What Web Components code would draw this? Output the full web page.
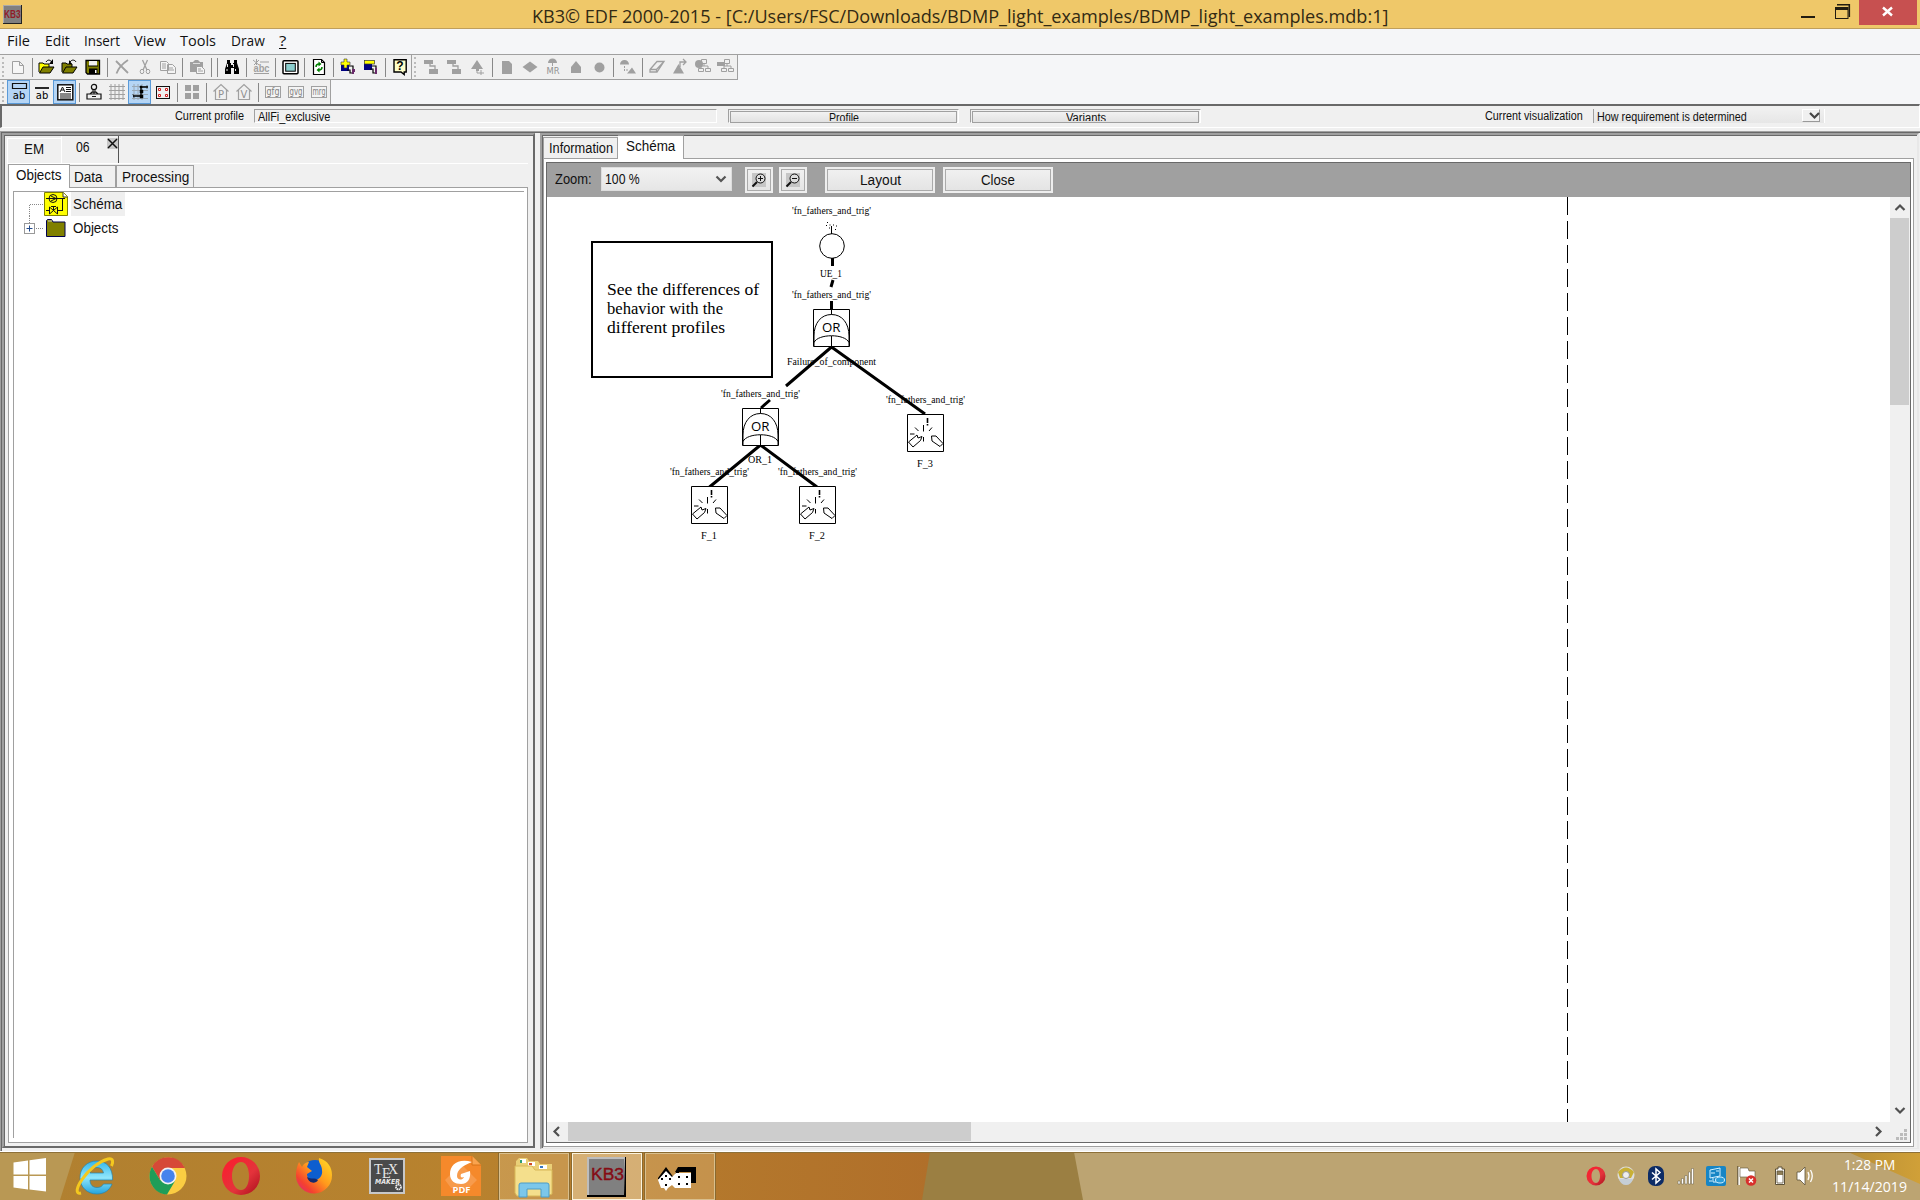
<!DOCTYPE html>
<html lang="en">
<head>
<meta charset="utf-8">
<title>KB3</title>
<style>
html,body{margin:0;padding:0}
body{width:1920px;height:1200px;overflow:hidden;background:#f0f0f0;font-family:"Liberation Sans",Arial,sans-serif;color:#111}
kb-app{height:1200px}
</style>
</head>
<body>
<kb-app></kb-app>
<script>
const define = (tag, css, html, setup) => {
  const t = document.createElement('template');
  t.innerHTML = `<style>*{box-sizing:border-box}:host{box-sizing:border-box;display:block}svg{overflow:visible}${css}</style>${html}`;
  customElements.define(tag, class extends HTMLElement {
    constructor() {
      super();
      this.attachShadow({ mode: 'open' }).append(t.content.cloneNode(true));
    }
    connectedCallback() { if (setup) setup.call(this, this.shadowRoot); }
  });
};

/* A single line of text squeezed or stretched to an exact width */
define('fit-text',
  `:host{display:block;flex:none;line-height:16px;font-size:14px;white-space:nowrap}
   span{display:inline-block;transform-origin:0 0}`,
  `<span><slot></slot></span>`,
  function (r) {
    const w = +this.getAttribute('w');
    this.style.width = w + 'px';
    if (this.hasAttribute('size')) this.style.fontSize = this.getAttribute('size') + 'px';
    const s = r.querySelector('span');
    s.style.transform = `scaleX(${w / s.offsetWidth})`;
  });

/* ---------- toolbar icons, 20x20 grid ---------- */
const G = '#a0a0a0';
const folder = (c, flip) => `<path d="M2 15V6h4l1 1h5v3" fill="${flip ? '#808000' : '#ffff00'}" stroke="#000"/><path d="M2.500 16L6 10h11l-4 6z" fill="#808000" stroke="#000"/>` +
  (flip ? `<path d="M10 5c2-3 5-2 6 0" fill="none" stroke="#000"/><path d="M9 3v4h3z"/>` : `<path d="M9 5c2-3 4-2 6 0" fill="none" stroke="#000"/><path d="M16 2v5h-4z"/>`);
const org = `<path d="M8.500 2.500h5v4h-5zM5.500 11.500h5v3h-5zM12.500 11.500h5v3h-5zM11 7v2M8 11V9h7v2" fill="#f0f0f0" stroke="${G}"/>`;
const box3 = t => `<rect x="2.500" y="4.500" width="15" height="11" fill="#f4f4f4" stroke="${G}"/><text x="10" y="12.500" textLength="13" lengthAdjust="spacingAndGlyphs" text-anchor="middle" font-size="10" font-family="DejaVu Sans,sans-serif" fill="#808080">${t}</text>`;
const ICONS = {
  new: `<path d="M4.500 4.500h7l4 4v8h-11zM11.500 4.500v4h4" fill="#f6f6f6" stroke="${G}"/>`,
  open: folder('', 0), open2: folder('', 1),
  save: `<path d="M3 3.500h13.500v13.500H4.500L3 15.500z" fill="#808000" stroke="#000" stroke-width="1.300"/><path d="M6 4h8v5H6z" fill="#f0f0f0"/><path d="M5 9h10" stroke="#000"/><path d="M6 11.500h8.500V17H6z"/><path d="M12 13h1.500v3H12z" fill="#fff"/>`,
  del: `<path d="M4 4l12 12M16 3C10 7 6 12 4.500 16.500" fill="none" stroke="${G}" stroke-width="1.800"/>`,
  cut: `<path d="M7.500 3l4.500 10M12.500 3L8 13" stroke="${G}" stroke-width="1.300"/><ellipse cx="7" cy="14.500" rx="1.800" ry="2.200" fill="none" stroke="${G}"/><ellipse cx="13" cy="14.500" rx="1.800" ry="2.200" fill="none" stroke="${G}"/>`,
  copy: `<path d="M2.500 4.500h6l2 2v7h-8zM9.500 7.500h5l3 3v6h-8z" fill="#f4f4f4" stroke="${G}"/><path d="M4 7h4M4 9h4M4 11h4M11 11h4M11 13h5" stroke="${G}"/>`,
  paste: `<path d="M3 5h3l2-2h3l2 2h3v10H3z" fill="${G}"/><path d="M9.500 9.500h5l3 3v4h-8z" fill="#f4f4f4" stroke="${G}"/><path d="M11 12h3M11 14h5" stroke="${G}"/><path d="M6 6.500h7" stroke="#ddd"/>`,
  find: `<path d="M5 3h3v3h1v2h2V6h1V3h3v3l2 6v5h-5v-6H9v6H3v-5l2-6z"/><path d="M5.500 7v3M11.500 7v3M5 12v2M13.500 12v2" stroke="#fff" stroke-width=".9"/>`,
  abc: `<text x="10.500" y="15" text-anchor="middle" textLength="16" lengthAdjust="spacingAndGlyphs" font-weight="bold" font-size="11" font-family="Liberation Sans" fill="${G}">abc</text><path d="M3 16.500h15M2 3l6 5M8 3L3 8M5.500 2v6M9 5h9" stroke="${G}"/>`,
  screen: `<rect x="3" y="3.800" width="15" height="13" rx="1" fill="#fff" stroke="#000" stroke-width="1.500"/><rect x="5.700" y="6.400" width="9.600" height="7.800" fill="#8ccfcf" stroke="#000"/>`,
  refresh: `<path d="M4.500 2.500h8l3 3v12h-11z" fill="#fff" stroke="#000" stroke-width="1.200"/><path d="M12.500 2.500v3h3" fill="none" stroke="#000"/><path d="M7 10c0-2 1-3 3-3M13 10c0 2-1 3-3 3" stroke="#008000" stroke-width="1.500" fill="none"/><path d="M9.500 4.500v5l3-2.500zM10.500 10.500v5l-3-2.500z" fill="#008000"/>`,
  add: `<rect x="3" y="8" width="8" height="6" fill="#000080"/><path d="M6 2h3v3h3v3H9v3H6V8H3V5h3z" fill="#ff0" stroke="#333" stroke-width=".6"/><path d="M11 9h4v4M9 13h3v3h3" fill="none" stroke="#000" stroke-width="1.200"/><path d="M14 12h3v3h-3zM14 15h2v2h-2z" fill="#6b2a6b"/>`,
  rem: `<rect x="3" y="7" width="8" height="6" fill="#000080"/><rect x="3.500" y="3.500" width="10" height="3.500" fill="#ff0" stroke="#333" stroke-width=".7"/><path d="M11 9h4v4M9 12h3v4h2" fill="none" stroke="#000" stroke-width="1.200"/><path d="M14 11h2v3h-2zM14 14h2v3h-2z" fill="#6b2a6b"/>`,
  help: `<path d="M4 2.800h12.200V15h-2v2.500L11 15H4z" fill="#ffffc8" stroke="#000" stroke-width="1.400"/><text x="10" y="13" text-anchor="middle" font-weight="bold" font-size="12" font-family="Liberation Sans">?</text>`,
  link: `<path d="M2 3h9v4H2zM7 12h9v5H7z" fill="${G}"/><path d="M8 7v2h5v3" fill="none" stroke="${G}" stroke-width="1.300"/>`,
  trilink: `<path d="M9 3l6 9H3zM8 12h3v2H8z" fill="${G}"/><path d="M9 11v5h7M13 13v5" fill="none" stroke="${G}"/>`,
  page: `<path d="M5 4h7l3 3v10H5z" fill="${G}"/>`,
  diamond: `<path d="M10 4.500l7.500 5.500-7.500 5.500L2.500 10z" fill="${G}"/>`,
  mr: `<path d="M5 6a4.500 4.500 0 0 1 9 0z" fill="${G}"/><path d="M9.500 6v3" stroke="${G}"/><text x="10" y="17" text-anchor="middle" textLength="13" lengthAdjust="spacingAndGlyphs" font-size="9" font-family="DejaVu Sans" fill="#909090">MR</text>`,
  house: `<path d="M10 4l5 6v6H5v-6z" fill="${G}"/>`,
  dot: `<circle cx="10.500" cy="10.500" r="5" fill="${G}"/>`,
  trans: `<path d="M2 7.500a4.500 4.500 0 0 1 9 0zM9 16.500l5-6 4 6z" fill="${G}"/><path d="M6.500 9v6M8 13h3" stroke="${G}" stroke-dasharray="2 1"/>`,
  erase: `<path d="M3 12.500L10 4.500h7L10 15H3zM3 12.500h6.500L17 4.500M9.500 12.500V15" fill="none" stroke="${G}" stroke-width="1.300"/>`,
  tri2: `<path d="M3 16.500L8.500 7l5.500 9.500z" fill="${G}"/><path d="M10 10V5h5M13 2l3 3-3 3" fill="none" stroke="${G}" stroke-width="1.300"/>`,
  org1: org + `<circle cx="6" cy="7" r="4" fill="${G}"/>`, org2: org + `<path d="M1 5h8v4H1z" fill="${G}"/>`,
  boxab: `<path d="M3.500 1.500h14v5h-14z" fill="none" stroke="#111" stroke-width="1.200"/><text x="10" y="17" text-anchor="middle" textLength="12.500" lengthAdjust="spacingAndGlyphs" font-size="11" font-family="DejaVu Sans">ab</text>`,
  lineab: `<path d="M3 6h14" stroke="#111" stroke-width="1.800"/><text x="10" y="17" text-anchor="middle" textLength="12.500" lengthAdjust="spacingAndGlyphs" font-size="11" font-family="DejaVu Sans">ab</text>`,
  doc: `<rect x="2.800" y="2.800" width="15" height="15" fill="#fff" stroke="#111" stroke-width="1.500"/><path d="M5 10l2.500-5L10 10M6 8h3M11 5.500h5M11 7.500h5M11 9.500h5M5 12h11M5 14h11M5 16h11" fill="none" stroke="#111"/>`,
  stamp: `<path d="M3 12h14v5H3zM6 12l2-2h4l2 2" fill="#f0f0f0" stroke="#111" stroke-width="1.200"/><circle cx="10" cy="5" r="2.600" fill="#f0f0f0" stroke="#111" stroke-width="1.200"/><path d="M9 8v3h2V8M8 14.500h4" fill="none" stroke="#111"/>`,
  grid: `<path d="M4 2v16M8 2v16M12 2v16M16 2v16M2 4.500h16M2 8.500h16M2 12.500h16M2 16.500h16" stroke="${G}"/>`,
  snap: `<path d="M4 2v16M8 2v16M12 2v16M2 4.500h16M2 8.500h16M2 12.500h16M2 16.500h16" stroke="#9aa8b5"/><path d="M3 14h8V5h7" fill="none" stroke="#000" stroke-width="1.300"/><path d="M3 12l1 4M10 8h3v3h-3zM17 3v4M10 4h2v2h-2zM10 13h3v3h-3z" stroke="#000" stroke-width=".5"/>`,
  select: `<rect x="3.500" y="4.500" width="13" height="12" fill="none" stroke="#111"/><path d="M5.500 6.500h2v2h-2zM12.500 6.500h2v2h-2zM5.500 12.500h2v2h-2zM12.500 12.500h2v2h-2z" fill="#fff" stroke="#d02020"/>`,
  tiles: `<path d="M3 3h6v6H3zM11 3h6v6h-6zM3 11h6v6H3zM11 11h6v6h-6z" fill="${G}"/>`,
  hp: `<path d="M2.500 9.500L10 2.500l7.500 7M4.500 8v9.500h11V8" fill="none" stroke="${G}" stroke-width="1.200"/><text x="10" y="15.500" text-anchor="middle" font-size="10" font-family="DejaVu Sans" fill="#909090">P</text>`,
  hv: `<path d="M2.500 9.500L10 2.500l7.500 7M4.500 8v9.500h11V8" fill="none" stroke="${G}" stroke-width="1.200"/><text x="10" y="15.500" text-anchor="middle" font-size="10" font-family="DejaVu Sans" fill="#909090">V</text>`,
  gfg: box3('gfg'), gvg: box3('gvg'), mrg: box3('mrg')
};
define('tb-icon',
  `:host{flex:none;width:23px;height:24px;display:flex;align-items:center;justify-content:center}
   :host([on]){background:#b5d5f5;border:1px solid #5a9ad8}svg{display:block;flex:none}`,
  `<svg width="20" height="20" viewBox="0 0 20 20"></svg>`,
  function (r) { r.querySelector('svg').innerHTML = ICONS[this.getAttribute('name')]; });
define('tb-sep', `:host{flex:none;width:6px;height:19px;display:flex;justify-content:center}i{width:1px;background:#888}`, `<i></i>`);
define('tb-grip', `:host{flex:none;width:7px;height:20px;padding-left:2px}i{display:block;width:2px;height:100%;background:repeating-linear-gradient(#bbb 0 2px,transparent 2px 4.500px)}`, `<i></i>`);
define('tool-strip', `:host{display:flex;align-items:center;background:#f0f0f0;border-right:1px solid #a0a0a0;border-bottom:1px solid #a0a0a0;flex:none}`, `<slot></slot>`);

const strip = s => s.split(' ').map(n => n === '|' ? '<tb-sep></tb-sep>' : n[0] === '*' ? `<tb-icon on name="${n.slice(1)}"></tb-icon>` : `<tb-icon name="${n}"></tb-icon>`).join('');
define('tool-area',
  `:host{height:49px;background:#f5f6f8;display:flex;flex-direction:column}
   div{display:flex;height:25px}tool-strip{height:25px}.two{height:24px}.two tool-strip{height:24px;border-bottom:0}
   .a tb-grip{margin-right:-1px}.b tb-grip{width:8px}`,
  `<div><tool-strip class="a"><tb-grip></tb-grip>${strip('new | open open2 save | del cut copy | paste | | find | abc | screen | refresh | add rem | help')}</tool-strip>
   <tool-strip class="b"><tb-grip></tb-grip>${strip('link link trilink | page diamond mr house dot | trans | erase tri2 org1 org2')}</tool-strip></div>
   <div class="two"><tool-strip><tb-grip></tb-grip>${strip('*boxab lineab *doc | stamp grid *snap select | tiles | hp hv | gfg gvg mrg')}</tool-strip></div>`);

define('title-bar',
  `:host{height:29px;background:#efc869;border-bottom:1px solid #bf9f5c;display:flex;font-family:"Open Sans","Noto Sans",sans-serif;color:#322a14}
   .ic{margin:5px 0 0 3px}.t{margin:2px 0 0 510px;line-height:27px}.w{margin-left:auto;margin-top:0}`,
  `<svg class="ic" width="19" height="19" viewBox="0 0 19 19"><path d="M0 0h19v19H0z" fill="#222"/><path d="M0 0h18v18H0z" fill="#aaa"/><path d="M1 1h17v17H1z" fill="#808080"/><text x="1" y="12.500" textLength="16.500" lengthAdjust="spacingAndGlyphs" font-size="11" font-weight="bold" font-family="Liberation Sans" fill="#901c28">KB3</text></svg>
   <fit-text class="t" w="856" size="18.500">KB3© EDF 2000-2015 - [C:/Users/FSC/Downloads/BDMP_light_examples/BDMP_light_examples.mdb:1]</fit-text>
   <svg class="w" width="119" height="28" viewBox="1801 0 119 28"><path d="M1801 16h14v2h-14z" fill="#221c10"/><path d="M1837 4.700h12.300V17" fill="none" stroke="#221c10" stroke-width="1.600"/><rect x="1835.500" y="7.500" width="12.500" height="11" fill="none" stroke="#221c10"/><path d="M1835 7h13v3h-13z" fill="#221c10"/><path d="M1859 0h58v25h-58z" fill="#c75050"/><path d="M1883 7.500l9 8M1892 7.500l-9 8" stroke="#fff" stroke-width="2.400"/></svg>`);
define('menu-bar',
  `:host{height:26px;background:#f5f6f8;border-bottom:1px solid #a0a0a0;display:flex;padding:2px 0 0 7px;font-family:"Open Sans","Noto Sans",sans-serif}
   fit-text{line-height:20px}u{text-underline-offset:2px}`,
  [['File', 23, 15], ['Edit', 25, 14], ['Insert', 36, 14], ['View', 32, 14], ['Tools', 36, 15], ['Draw', 34, 14], ['<u>?</u>', 7, 0]].map(m => `<fit-text w="${m[1]}" size="14.500" style="margin-right:${m[2]}px">${m[0]}</fit-text>`).join(''));

define('profile-button',
  `:host{flex:none;width:231px;height:14px;border:1px solid;border-color:#a0a0a0 #fff #fff #a0a0a0;padding:1px 1px 0 1px}
   div{height:12px;border:1px solid #a0a0a0;background:linear-gradient(#f2f2f2,#e2e2e2);display:flex;justify-content:center;overflow:hidden}
   p{margin:0;height:9px;overflow:hidden;line-height:11px}`,
  `<div><p><slot></slot></p></div>`);
define('profile-bar',
  `:host{height:24px;border:solid;border-width:2px 1px 1px 2px;border-color:#696969 #fff #fff #696969;display:flex;align-items:flex-start;padding-top:3px;background:#f0f0f0}
   fit-text{line-height:14px}
   .f{height:14px;width:463px;margin:0 11px 0 10px;border:1px solid;border-color:#a0a0a0 #fff #fff #a0a0a0;padding:0 0 0 3px}
   .c{display:flex;margin-left:10px;width:232px;height:14px;border-left:1px solid #a0a0a0;border-right:1px solid #fff;padding-left:3px;background:linear-gradient(#f0f0f0,#e6e6e6)}
   .c fit-text{padding-top:1px}
   .d{margin:0 4px 0 auto;width:18px;height:13px;background:#f0f0f0;border:1px solid;border-color:#fff #999 #999 #fff}`,
  `<fit-text w="69" size="12" style="margin-left:173px">Current profile</fit-text>
   <div class="f"><fit-text w="72" size="12">AllFi_exclusive</fit-text></div>
   <profile-button><fit-text w="30" size="12" style="line-height:12px">Profile</fit-text></profile-button>
   <profile-button style="margin-left:11px"><fit-text w="40" size="12" style="line-height:12px">Variants</fit-text></profile-button>
   <fit-text w="98" size="12" style="margin-left:284px">Current visualization</fit-text>
   <div class="c"><fit-text w="150" size="12">How requirement is determined</fit-text><svg class="d" viewBox="0 0 16 11"><path d="M7 3l4.500 4.500L16 3" fill="none" stroke="#444" stroke-width="2.200"/></svg></div>`);

/* ---------- left panel ---------- */
define('object-tree',
  `:host{border-left:1px solid #a0a0a0;border-top:1px solid #a0a0a0;background:#fff;flex:1}
   .r{display:flex;align-items:center;height:24px}.h{background:#efefef;height:24px;width:54px;padding:4px 2px}`,
  `<div class="r"><svg width="57" height="24" viewBox="14 192 57 24"><path d="M29.500 216V204.500H44" fill="none" stroke="#888" stroke-dasharray="1 1"/><path d="M44.500 192.500h19l4 4v19h-23z" fill="#ff0" stroke="#808000"/><path d="M63 192.500v4.500h4.500" fill="#fff" stroke="#333"/><circle cx="53" cy="198.500" r="4" fill="none" stroke="#111"/><path d="M46 198.500h12M51 196l5 2.500-5 2.500M57 198.500h8M62.500 198v13M46 210.500h4M58 210.500h5M49.500 207v7l8-7v7zM53.500 210v-3M51 206.500h5" fill="none" stroke="#111"/></svg><div class="h"><fit-text w="49">Schéma</fit-text></div></div>
   <div class="r"><svg width="57" height="24" viewBox="14 216 57 24"><path d="M29.500 216v7M36 228.500h8" fill="none" stroke="#888" stroke-dasharray="1 1"/><rect x="24.500" y="223.500" width="10" height="10" fill="#fff" stroke="#999"/><path d="M26.500 228.500h6M29.500 225.500v6" stroke="#234a8c"/><path d="M46.500 236.500v-16l1-1h4l1.500 2.500h12v14.500z" fill="#808000" stroke="#000050"/><path d="M48 221h4" stroke="#ccc"/></svg><fit-text w="45" style="margin-left:2px">Objects</fit-text></div>`);
define('left-panel',
  `:host{width:533px;height:1015px;flex:none;border:2px solid;border-color:#a0a0a0 #696969 #696969 #a0a0a0;box-shadow:inset 1px 1px #696969;display:flex;flex-direction:column;background:#f0f0f0;padding:1px 5px 3px 4px}
   .doc{display:flex;height:28px;align-items:flex-start;border-bottom:1px solid #fff;margin-left:-1px}
   .em{margin-top:2px;width:54px;height:25px;border-left:1px solid #fff;border-top:1px solid #fff;padding:2px 0 0 16px}
   .six{width:58px;height:27px;border-left:1px solid #fff;border-right:1px solid #555;padding:3px 0 0 14px;display:flex;justify-content:space-between}.six svg{margin-top:-1px}
   .tabs{display:flex;align-items:flex-end;height:24px;margin-bottom:-1px;z-index:1}
   .tabs div{height:23px;border:1px solid #a0a0a0}.tabs .on{height:24px;width:62px;background:#fff;border-bottom:0;padding:2px 0 0 7px}
   .page{flex:1;display:flex;border:1px solid #a0a0a0;background:#fff;padding:3px 3px 4px 4px}`,
  `<div class="doc"><div class="em"><fit-text w="20">EM</fit-text></div><div class="six"><fit-text w="14">06</fit-text><svg width="11" height="11" viewBox="0 0 11 11"><path d="M0 0h11v11H0z" fill="#c8c8c8"/><path d="M1 1l9 9M10 1l-9 9" stroke="#111" stroke-width="1.500"/></svg></div></div>
   <div class="tabs"><div class="on"><fit-text w="45">Objects</fit-text></div><div style="width:46px;padding:3px 0 0 4px;border-left:0"><fit-text w="29">Data</fit-text></div><div style="width:78px;padding:3px 0 0 5px"><fit-text w="67">Processing</fit-text></div></div>
   <div class="page"><object-tree></object-tree></div>`);

/* ---------- diagram ---------- */
const T = (x, y, w, s, size = 11) => `<text x="${x}" y="${y}" textLength="${w}" lengthAdjust="spacingAndGlyphs" font-size="${size}">${s}</text>`;
const trig = (x, y) => T(x, y, 79, "'fn_fathers_and_trig'", 10.5);
const gate = (x, y) => `<g transform="translate(${x} ${y})" fill="none" stroke="#000"><path d="M.5.5h36v37H.500z" fill="#fff"/><path d="M18.500 0v5.500M1 37V27C1 14 8 5.500 18.500 5.500S36 14 36 27v10M1 33.500C5 24.500 32 24.500 36 33.500M18.500 27v10"/><text x="9" y="23" fill="#000" stroke="none" font-family="Open Sans" font-size="12.500" textLength="18.500" lengthAdjust="spacingAndGlyphs">OR</text></g>`;
const leaf = (x, y) => `<g transform="translate(${x} ${y})" fill="none" stroke="#000"><path d="M.5.5h36v37H.500z" fill="#fff"/><path d="M20.500 4v5M20.500 10v1.500" stroke-width="1.600"/><path d="M8 13.500l3.500 3.500M16.500 11v6.500M25 13.500L22 17M3 20h4.500M16.500 23v4.500M1.500 28l8.500-7 1 3 4-1.500-1.500 4L6 33zM24.500 22h4.500l7 7.500-3 3-8-5.500z"/></g>`;
define('diagram-canvas',
  `:host{flex:none;width:1343px;height:925px;background:#fff}svg{display:block}`,
  `<svg width="1343" height="925" viewBox="547 197 1343 925" font-family="Liberation Serif,Times New Roman,serif">
   <path d="M1567.500 197v925" stroke="#000" stroke-width="1" stroke-dasharray="18 6"/>
   <rect x="592" y="242" width="180" height="135" fill="#fff" stroke="#000" stroke-width="2"/>
   ${T(607, 295, 152, 'See the differences of', 16)}${T(607, 314, 116, 'behavior with the', 16)}${T(607, 333, 118, 'different profiles', 16)}
   <circle cx="832" cy="246" r="12.300" fill="none" stroke="#000"/><path d="M831.500 226v8" stroke="#000"/><path d="M827 222.500h1M829.500 225h1M826 225.500h1M833 225h1M835 229.500h1M829 228h1M836 226h1" stroke="#000"/>
   <g fill="none" stroke="#000" stroke-width="3"><path d="M832.500 258v8M833 280l-2 7M831.500 301v8M831.500 347L786 386M770 400l-9 8M831.500 347L925 414M760.500 445L709.500 487M760.500 445L817 487"/></g>
   ${gate(813, 309)}${gate(742, 408)}${leaf(691, 486)}${leaf(799, 486)}${leaf(907, 414)}
   ${trig(792, 214)}${trig(792, 298)}${trig(721, 397)}${trig(886, 403)}${trig(670, 475)}${trig(778, 475)}
   ${T(820, 277, 22, 'UE_1', 10.5)}${T(787, 365, 89, 'Failure_of_component', 10.5)}${T(748, 463, 24, 'OR_1', 10.5)}${T(917, 467, 16, 'F_3', 10.5)}${T(701, 539, 16, 'F_1', 10.5)}${T(809, 539, 16, 'F_2', 10.5)}
   </svg>`);
define('v-scroll', `:host{width:20px;height:925px;background:#f0f0f0;display:flex;flex-direction:column;justify-content:space-between}i{display:block;height:187px;width:19px;background:#cdcdcd;margin-bottom:auto}svg{display:block}`,
  `<svg width="20" height="21"><path d="M5.500 13L10 8.500l4.500 4.500" fill="none" stroke="#505050" stroke-width="2.200"/></svg><i></i><svg width="20" height="21"><path d="M5.500 7L10 11.500 14.500 7" fill="none" stroke="#505050" stroke-width="2.200"/></svg>`);
define('h-scroll', `:host{height:20px;background:#f0f0f0;display:flex}i{display:block;width:403px;height:19px;background:#cdcdcd;margin-right:auto}svg{display:block}`,
  `<svg width="21" height="20"><path d="M12 5L7.500 9.500 12 14" fill="none" stroke="#505050" stroke-width="2.200"/></svg><i></i><svg width="43" height="20"><path d="M9 5l4.500 4.500L9 14" fill="none" stroke="#505050" stroke-width="2.200"/><path d="M37 7h3v3h-3zM33 11h3v3h-3zM37 11h3v3h-3zM29 15h3v3h-3zM33 15h3v3h-3zM37 15h3v3h-3z" fill="#bbb"/></svg>`);
define('grey-button', `:host{flex:none;height:26px;border:1px solid #eee;padding:1px}div{height:22px;border:1px solid #aaa;background:linear-gradient(#f0f0f0,#e4e4e4);display:flex;justify-content:center;align-items:center;box-shadow:0 0 0 1px #eee}`, `<div><slot></slot></div>`);
define('zoom-bar',
  `:host{height:34px;background:#a0a0a0;display:flex;align-items:flex-start;padding:4px 0 0 8px}
   .z{margin-top:4px}.c{display:flex;margin:0 13px 0 9px;width:131px;height:24px;background:linear-gradient(#f2f2f2,#e6e6e6);border:1px solid #ddd;padding:3px 3px;justify-content:space-between}`,
  `<fit-text class="z" w="37">Zoom:</fit-text><div class="c"><fit-text w="35">100 %</fit-text><svg width="14" height="14"><path d="M2.500 5.500L7 10l4.500-4.500" fill="none" stroke="#555" stroke-width="2.200"/></svg></div>
   ${['M6 5.500h5M8.500 3v5', 'M6 5.500h5'].map((p, i) => `<grey-button style="width:28px;margin-right:${i ? 18 : 6}px"><svg width="14" height="14" viewBox="0 0 14 14"><path d="M0 0h14v14H0z" fill="#c6c6c6"/><circle cx="8.500" cy="5.500" r="4.500" fill="#ddd" stroke="#111"/><path d="M5 9l-4.500 4.500" stroke="#111" stroke-width="2"/><path d="${p}" stroke="#111"/></svg></grey-button>`).join('')}
   <grey-button style="width:110px;margin-right:8px"><fit-text w="41">Layout</fit-text></grey-button><grey-button style="width:110px"><fit-text w="34">Close</fit-text></grey-button>`);
define('right-panel',
  `:host{flex:1;height:1016px;border:2px solid;border-width:2px 2px 1px 2px;border-color:#a0a0a0 #e8e8e8 #e8e8e8 #a0a0a0;box-shadow:inset 1px 1px #696969;display:flex;flex-direction:column;padding:0 3px 1px 1px;background:#f0f0f0}
   .tabs{display:flex;flex:none;align-items:flex-end;height:23px;z-index:1}
   .tabs div{height:21px;border:1px solid #a0a0a0;border-bottom:0;width:75px;padding:2px 0 0 5px}.tabs .on{height:24px;width:66px;background:#fff;padding:2px 0 0 8px;margin-bottom:-1px;border-left:0}
   .page{flex:none;height:989px;border:1px solid #a0a0a0;background:#fff;padding:3px 2px}.in{border:1px solid #696969;height:981px}.row{display:flex}`,
  `<div class="tabs"><div><fit-text w="64">Information</fit-text></div><div class="on"><fit-text w="49">Schéma</fit-text></div></div>
   <div class="page"><div class="in"><zoom-bar></zoom-bar><div class="row"><diagram-canvas></diagram-canvas><v-scroll></v-scroll></div><h-scroll></h-scroll></div></div>`);
define('work-space',
  `:host{height:1024px;padding-top:3px;background:#f0f0f0;border-bottom:1px solid #fff}
   div{height:1020px;display:flex;align-items:flex-start;border:2px solid;border-width:1px 0 0 1px;border-color:#a0a0a0;box-shadow:inset 1px 1px #696969;padding:1px 1px 0 1px}right-panel{margin-left:5px}`,
  `<div><left-panel></left-panel><right-panel></right-panel></div>`);

/* ---------- task bar ---------- */
const opera = (id, s) => `<svg width="${s}" height="${s}" viewBox="0 0 40 40"><defs><linearGradient id="${id}" x2="1" y2="1"><stop stop-color="#ff1b2d"/><stop offset=".6" stop-color="#e3333b"/><stop offset="1" stop-color="#a90d1a"/></linearGradient></defs><path fill-rule="evenodd" d="M20 1a19 19 0 1 0 0 38 19 19 0 1 0 0-38zm0 5c5 0 8 6 8 14s-3 14-8 14-9-6-9-14 4-14 9-14z" fill="url(#${id})"/></svg>`;
define('task-cell',
  `:host{flex:none;width:73.200px;height:48px;display:flex;align-items:center;justify-content:center}
   div{display:flex;align-items:center;justify-content:center}
   :host([open]) div{width:70px;height:47px;margin-top:1px;background:rgba(225,190,130,.38);border:1px solid #d9bf8d;outline:1px solid #8a6a30}
   :host([active]) div{background:rgba(235,210,165,.6);border-color:#fbf3dd}`,
  `<div><slot></slot></div>`);
define('task-bar',
  `:host{height:48px;display:flex;position:relative;font-family:"Open Sans","Noto Sans",sans-serif;color:#fff;background:#bca470;overflow:hidden}
   .bg{position:absolute;left:0;top:0}.m{position:relative;display:flex;width:100%;height:48px}
   .start{width:58px;height:48px;flex:none}.tray{margin-left:auto;display:flex;align-items:center;flex:none}
   .clock{width:76px;margin:0 13px 0 0;display:flex;flex-direction:column;align-items:center}.clock fit-text{line-height:22px}`,
  `<svg class="bg" width="1920" height="48" viewBox="0 0 1920 48"><defs><linearGradient id="g"><stop stop-color="#b08030"/><stop offset=".5" stop-color="#b8822e"/><stop offset="1" stop-color="#b06f2a"/></linearGradient><linearGradient id="y"><stop stop-color="#b88e35"/><stop offset="1" stop-color="#d0a038"/></linearGradient></defs>
   <path d="M0 0h932l-8 48H0z" fill="url(#g)"/><path d="M0 0h75L60 48H0z" fill="#b99854"/><path d="M930 0h145l9 48H922z" fill="#9b7f42"/><path d="M1074 0h846v48H1083z" fill="#bca472"/><path d="M1848 0h72v32z" fill="url(#y)"/><path d="M0 .5h1920" stroke="#8d7038"/></svg>
   <div class="m">
   <svg class="start" viewBox="0 0 58 48"><path d="M13.500 10.500l14.500-2V22.500H13.500zM29.500 8.300L46 6v16.500H29.500zM13.500 24h14.500v13.500l-14.500-2zM29.500 24H46v15.500l-16.500-2z" fill="#fff"/></svg>
   <task-cell><svg width="40" height="40" viewBox="0 0 40 40"><defs><linearGradient id="ie" x2="0" y2="1"><stop stop-color="#35b6ea"/><stop offset=".5" stop-color="#8fe6fb"/><stop offset="1" stop-color="#25a4dd"/></linearGradient></defs><path fill-rule="evenodd" d="M37.500 24H15c0 5 3 7.500 7 7.500 3 0 5-1 6.500-3.500H37c-2.500 6.500-8 10-15 10C12 38 5 31 5 21.500S12 5 22 5c9.500 0 16 7 15.500 19zM15 17h13.500c-.5-3.500-3-5.500-6.500-5.500S15.500 13.500 15 17z" fill="url(#ie)" stroke="#2784ad" stroke-width=".7"/><path d="M6 37C-6 40 12 9 33 3c6-1.500 5 4 3.500 7" fill="none" stroke="#f4c81e" stroke-width="3"/></svg></task-cell>
   <task-cell><svg width="38" height="38" viewBox="-19 -19 38 38"><circle r="18.500" fill="#fbcd42"/><path d="M-16-9.300A18.500 18.500 0 0 1 17-8H0L-8 4z" fill="#d64937"/><path d="M-16-9.300A18.500 18.500 0 0 0-1 18.500L7 5 0 8-8 4z" fill="#1f9d58"/><circle r="8.500" fill="#f2f2f2"/><circle r="6.800" fill="#4583ec"/></svg></task-cell>
   <task-cell>${opera('op', 40)}</task-cell>
   <task-cell><svg width="40" height="40" viewBox="0 0 40 40"><defs><linearGradient id="ff" x1="1" x2="0" y2="1"><stop stop-color="#ffe226"/><stop offset=".45" stop-color="#ff9a1c"/><stop offset=".75" stop-color="#f5412f"/><stop offset="1" stop-color="#d6208c"/></linearGradient></defs><circle cx="21" cy="18" r="14" fill="#0d5ecf"/><path d="M5 6l3 5c1-3 4-5 7-5l-2 5 5 4-5 3c0 4 3 6 7 6 5 0 9-4 8-10 0-5-4-7-3-12 9 3 13 9 13 17a18 18 0 0 1-36 1C2 14 3 10 5 6z" fill="url(#ff)"/><path d="M13 21c4 3 8 0 11 3-2 4-9 4-11-3z" fill="#152a6e"/></svg></task-cell>
   <task-cell><svg width="36" height="36" viewBox="0 0 36 36"><path d="M0 0h36v36H0z" fill="#c8c8c8"/><path d="M2 2h32v32H2z" fill="#4a4a4a"/><g fill="#e8e8e8"><text x="5" y="16" font-size="14" font-family="Liberation Serif">T</text><text x="13" y="20" font-size="14" font-family="Liberation Serif">E</text><text x="19" y="16" font-size="14" font-family="Liberation Serif">X</text><text x="6" y="25.500" font-size="7" font-weight="bold" font-style="italic" textLength="25" lengthAdjust="spacingAndGlyphs" font-family="DejaVu Sans">MAKER</text></g><circle cx="29.500" cy="29" r="2.500" fill="none" stroke="#eee" stroke-width="1.800" stroke-dasharray="1.600 .5"/></svg></task-cell>
   <task-cell><svg width="40" height="40" viewBox="0 0 40 40"><path d="M0 0h31l9 9v31H0z" fill="#f5892b"/><path d="M31 0v9h9" fill="#f9a34e" stroke="#d87316"/><path d="M20 8l16 16-8 8H10L4 24z" fill="#f9a662" opacity=".6"/><path fill-rule="evenodd" d="M31 6C17 2 9 9 9 18c0 7 5 10 11 10 7 0 10-6 9-13l-9 3c-1 3 0 4 3 3-2 4-7 3-7-1 0-6 5-10 15-14z" fill="#fff"/><text x="11.500" y="37" font-size="8.500" font-weight="bold" textLength="18" lengthAdjust="spacingAndGlyphs" font-family="Open Sans" fill="#fff">PDF</text></svg></task-cell>
   <task-cell open><svg width="40" height="40" viewBox="0 0 40 40"><path d="M2 4l3-3h8l2 3h9l2 3h12v8H2z" fill="#ead078"/><path d="M6 2h6v4H6zM14 5h7v4h-7zM25 8h8v4h-8z" fill="#fff"/><path d="M6 3h2v3H6z" fill="#2f9e73"/><path d="M26 9h3v2h-3z" fill="#3a78c0"/><path d="M15 6h3v2h-3z" fill="#d24a26"/><path d="M1 9h17l3 4h17v24l-5 2H3l-2-3z" fill="#f4df8c" stroke="#d8b858"/><path d="M5 28q0-2 2-2h26q2 0 2 2v12h-8v-8H13v8H5z" fill="#7cc7ea" stroke="#4d9cc6"/></svg></task-cell>
   <task-cell open active><svg width="39" height="40" viewBox="0 0 39 40"><path d="M0 0h39v40H0z" fill="#000"/><path d="M0 0h38L37 38H0z" fill="#bdbdbd"/><path d="M2 2h35v36H2z" fill="#808080"/><text x="4" y="23" textLength="33" lengthAdjust="spacingAndGlyphs" font-size="17" font-family="Liberation Sans" fill="#850c14" stroke="#850c14" stroke-width=".4">KB3</text></svg></task-cell>
   <task-cell open><svg width="38" height="24" viewBox="0 0 38 24" style="margin:5px 7px 0 0"><path d="M20 0h18v16h-5V5H17zM0 11L8 0l8 11 2-6h3v7H0z"/><path d="M0 13l8-9 6 6 4-4h15v15H17l-3-3-4 3-2 3-2-3H3z" fill="#fff"/><path d="M3 11h2v2H3zM11 11h2v2h-2zM7 8h2v2H7zM7 17h2v2H7zM20 9h2v2h-2zM28 9h2v2h-2zM20 16h2v2h-2zM28 16h2v2h-2z"/></svg></task-cell>
   <div class="tray">${opera('ops', 20)}
   <svg width="18" height="20" viewBox="0 0 18 20" style="margin-left:11px"><circle cx="9" cy="9" r="8.500" fill="#ddd"/><path d="M1 6q8-9 16 0l-3 6H3z" fill="#c9b035"/><circle cx="9" cy="9" r="3.500" fill="#eee" stroke="#999"/><path d="M2 13h14q-2 6-7 6t-7-6z" fill="#c5ced6"/></svg>
   <svg width="16" height="20" viewBox="0 0 16 20" style="margin-left:13px"><rect width="16" height="20" rx="7" fill="#0d2c66"/><path d="M4 6.500l8 7-4 3.500V3l4 3.500-8 7" fill="none" stroke="#fff" stroke-width="1.500"/></svg>
   <svg width="17" height="18" viewBox="0 0 17 18" style="margin-left:13px"><path d="M1 14h2v3H1zM4.500 11.500h2V17h-2zM8 8.500h2V17H8zM11.500 5h2v12h-2zM14.500 1.500h2V17h-2z" fill="#fff" stroke="#665c45" stroke-width=".5"/></svg>
   <svg width="20" height="20" viewBox="0 0 20 20" style="margin-left:12px"><rect width="20" height="20" rx="2" fill="#1685c5"/><path d="M4 4l10-2v8L4 12zM7 12v4h4M5 7h4M10 5h3M3 15h3" fill="none" stroke="#d4f0ff"/><ellipse cx="14" cy="14" rx="4.500" ry="3" fill="#2a9cd8" stroke="#d4f0ff"/></svg>
   <svg width="20" height="20" viewBox="0 0 20 20" style="margin-left:11px"><path d="M2 1v18" stroke="#fff" stroke-width="1.800"/><path d="M.8 0v19" stroke="#5c5138"/><path d="M3 2h8l1 3h6v8H11l-1-2H3z" fill="#fff" stroke="#5c5138" stroke-width=".6"/><circle cx="14" cy="14.500" r="5.300" fill="#d8302c"/><path d="M12 12.500l4 4M16 12.500l-4 4" stroke="#fff" stroke-width="1.500"/></svg>
   <svg width="12" height="20" viewBox="0 0 12 20" style="margin-left:17px"><path d="M1.500 3H4V1h4v2h2.500v15.500h-9z" fill="#fff" stroke="#5c5138"/><path d="M3 5h6v4H3z" fill="#8d7d58"/><path d="M3 5h6v12H3z" fill="none" stroke="#5c5138" stroke-width=".8"/></svg>
   <svg width="20" height="20" viewBox="0 0 20 20" style="margin:0 15px 0 10px"><path d="M1 6h3l5-5v18l-5-5H1z" fill="#fff" stroke="#5c5138" stroke-width=".8"/><path d="M12 6q2 4 0 8M14.500 4q3.500 6 0 12" fill="none" stroke="#fff" stroke-width="1.300"/></svg>
   <div class="clock"><fit-text w="51" size="14.500">1:28 PM</fit-text><fit-text w="75" size="14.500">11/14/2019</fit-text></div></div></div>`);

define('kb-app', `:host{display:flex;flex-direction:column;width:1920px}title-bar,menu-bar,tool-area,profile-bar,work-space,task-bar{flex:none}`,
  `<title-bar></title-bar><menu-bar></menu-bar><tool-area></tool-area><profile-bar></profile-bar><work-space></work-space><task-bar></task-bar>`);
</script>
</body>
</html>
